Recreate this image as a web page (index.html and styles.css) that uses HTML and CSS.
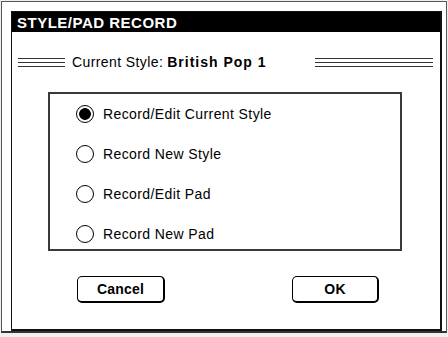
FILE: index.html
```html
<!DOCTYPE html>
<html>
<head>
<meta charset="utf-8">
<link rel="stylesheet" href="styles.css">
</head>
<body>
<div class="outer">
  <div class="dialog">
    <div class="titlebar">STYLE/PAD RECORD</div>
    <div class="current">
      <span class="lines lines-left"></span>
      <span class="label">Current Style:</span>
      <span class="value">British Pop 1</span>
      <span class="lines lines-right"></span>
    </div>
    <div class="group">
      <div class="option"><span class="radio checked"></span><span class="opt-text">Record/Edit Current Style</span></div>
      <div class="option"><span class="radio"></span><span class="opt-text">Record New Style</span></div>
      <div class="option"><span class="radio"></span><span class="opt-text">Record/Edit Pad</span></div>
      <div class="option"><span class="radio"></span><span class="opt-text">Record New Pad</span></div>
    </div>
    <div class="buttons">
      <div class="btn btn-cancel">Cancel</div>
      <div class="btn btn-ok">OK</div>
    </div>
  </div>
</div>
</body>
</html>
```
FILE: styles.css
```css
html, body {
  margin: 0;
  padding: 0;
}
body {
  width: 448px;
  height: 337px;
  background: #f0f0f0;
  font-family: "Liberation Sans", Arial, sans-serif;
  color: #000;
  overflow: hidden;
}
.outer {
  box-sizing: border-box;
  margin: 1px 0 0 1px;
  width: 446px;
  height: 332px;
  border: 1px solid #555;
  border-bottom: 2px solid #333;
  background: #fff;
  padding: 9px 4px 0 9px;
}
.dialog {
  box-sizing: border-box;
  width: 431px;
  height: 320px;
  border-style: solid;
  border-color: #111;
  border-width: 1px 2px 2px 1px;
  background: #fff;
}
.titlebar {
  height: 20px;
  background: #000;
  color: #fff;
  font-weight: bold;
  font-size: 15px;
  letter-spacing: 0.5px;
  line-height: 21px;
  padding-left: 5px;
}
.current {
  display: flex;
  align-items: center;
  height: 16px;
  margin-top: 22px;
  padding-left: 6px;
  padding-right: 7px;
  font-size: 14px;
  letter-spacing: 0.4px;
}
.lines {
  display: block;
  height: 9px;
  background: repeating-linear-gradient(to bottom, #333 0, #333 1px, transparent 1px, transparent 4px);
}
.lines-left {
  width: 47px;
  margin-right: 7px;
}
.lines-right {
  width: 118px;
  margin-left: auto;
}
.label {
  margin-right: 4px;
}
.value {
  font-weight: bold;
  letter-spacing: 1px;
}
.group {
  box-sizing: border-box;
  width: 354px;
  height: 159px;
  margin: 22px 0 0 36px;
  border: 2px solid #3a3a3a;
  padding: 11px 0 0 26px;
  display: flex;
  flex-direction: column;
  gap: 22px;
}
.option {
  display: flex;
  align-items: center;
  height: 18px;
  font-size: 14px;
  letter-spacing: 0.4px;
}
.radio {
  box-sizing: border-box;
  width: 18px;
  height: 18px;
  border: 1px solid #000;
  border-radius: 50%;
  margin-right: 9px;
  flex: none;
  background: #fff;
}
.radio.checked {
  background: radial-gradient(circle, #000 0, #000 5.5px, #fff 6.2px);
}
.buttons {
  display: flex;
  margin-top: 25px;
  padding-left: 65px;
}
.btn {
  box-sizing: border-box;
  height: 27px;
  border-style: solid;
  border-color: #000;
  border-width: 1px 2px 2px 1px;
  border-radius: 5px;
  font-weight: bold;
  font-size: 14px;
  display: flex;
  align-items: center;
  justify-content: center;
  letter-spacing: 0.2px;
}
.btn-cancel {
  width: 88px;
}
.btn-ok {
  width: 87px;
  margin-left: 127px;
}
```
